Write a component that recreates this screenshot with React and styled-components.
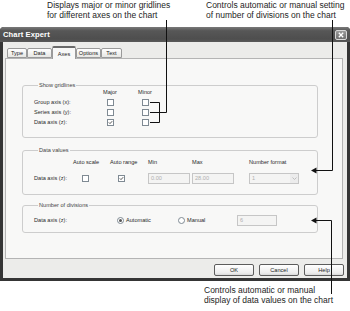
import React from 'react';
import styled, { createGlobalStyle } from 'styled-components';

const GlobalStyle = createGlobalStyle`
  body {
    margin: 0;
    background: #fff;
  }
`;

const Page = styled.div`
  position: relative;
  width: 350px;
  height: 311px;
  overflow: hidden;
  background: #fff;
  font-family: 'Liberation Sans', Arial, sans-serif;
`;

const TopNotes = styled.div`
  display: grid;
  grid-template-columns: 47px 159px 1fr;
  height: 27px;
`;

const Note = styled.div`
  grid-column: ${p => p.$col || 'auto'};
  font-size: 8.5px;
  line-height: 10px;
  color: #1e1e1e;
  white-space: nowrap;
`;

const BottomNote = styled(Note)`
  margin: 4px 0 0 204px;
`;

const Frame = styled.div`
  width: 350px;
  height: 254px;
  box-sizing: border-box;
  background: #353535;
  border-radius: 4px 4px 0 0;
  display: flex;
  flex-direction: column;
`;

const TitleBar = styled.div`
  height: 15px;
  display: flex;
  align-items: center;
  justify-content: space-between;
  padding: 0 3px;
  background: linear-gradient(#7a7a7a, #575757 25%, #4e4e4e 80%, #5a5a5a);
  border-radius: 4px 4px 0 0;
  color: #fff;
  font-size: 7.6px;
  font-weight: bold;
  letter-spacing: 0.1px;
`;

const CloseButton = styled.div`
  width: 12px;
  height: 10px;
  box-sizing: border-box;
  border: 1px solid #d8d8d8;
  border-radius: 2px;
  background: linear-gradient(#9a9a9a, #707070);
  display: flex;
  align-items: center;
  justify-content: center;
`;

const Body = styled.div`
  flex: 1;
  margin: 0 3px 3px;
  padding: 4px 3px 0 2px;
  background: #ececea;
  display: flex;
  flex-direction: column;
`;

const TabRow = styled.div`
  display: flex;
  align-items: flex-end;
  height: 12px;
  margin-left: 2px;
  position: relative;
  z-index: 1;
`;

const Tab = styled.div`
  width: ${p => p.$w}px;
  height: ${p => (p.$active ? 13 : 10)}px;
  box-sizing: border-box;
  border: 1px solid #9a9a9a;
  border-bottom: ${p => (p.$active ? 'none' : '1px solid #9a9a9a')};
  border-top: ${p => (p.$active ? '2px solid #6a6a6a' : '1px solid #9a9a9a')};
  border-radius: 2px 2px 0 0;
  background: ${p => (p.$active ? '#f8f8f7' : 'linear-gradient(#fff, #e6e6e3)')};
  margin-bottom: ${p => (p.$active ? -1 : 0)}px;
  font-size: 5.6px;
  color: #222;
  display: flex;
  align-items: center;
  justify-content: center;
`;

const Panel = styled.div`
  width: 338px;
  height: 201px;
  box-sizing: border-box;
  border: 1px solid #b4b4b4;
  background: #f8f8f7;
  padding: 26px 0 0 16px;
  display: flex;
  flex-direction: column;
  gap: ${p => p.$gap || 0}px;
`;

const Group = styled.div`
  width: 296px;
  height: ${p => p.$h}px;
  box-sizing: border-box;
  border: 1px solid #cdcdcd;
  border-radius: 3px;
  margin-top: ${p => p.$mt || 0}px;
  padding-left: 11px;
`;

const Legend = styled.div`
  width: fit-content;
  margin: -4px 0 ${p => p.$mb}px 4px;
  padding: 0 1px;
  background: #f8f8f7;
  font-size: 5.6px;
  line-height: 7px;
  color: #444;
`;

const Label = styled.span`
  font-size: 5.6px;
  line-height: 10px;
  color: #2a2a2a;
  white-space: nowrap;
`;

const GridlineGrid = styled.div`
  display: grid;
  grid-template-columns: 66px 20px 15px 20px;
  grid-auto-rows: 10px;
  align-items: center;
`;

const Cell = styled.div`
  grid-column: ${p => p.$col};
  display: flex;
  justify-content: ${p => (p.$center ? 'center' : 'flex-start')};
  padding-left: ${p => p.$pl || 0}px;
  align-items: center;
`;

const ValuesGrid = styled.div`
  display: grid;
  grid-template-columns: 39px 37px 38px 44px 57px 50px;
  grid-template-rows: 8px 12px;
  row-gap: 6px;
  margin-top: 4px;
  align-items: center;
`;

const DivisionsRow = styled.div`
  display: flex;
  align-items: center;
  height: 12px;
  margin-top: 5px;
`;

const Slot = styled.div`
  width: ${p => p.$w}px;
  display: flex;
  align-items: center;
  gap: 2px;
`;

const Box = styled.div`
  width: 7px;
  height: 7px;
  box-sizing: border-box;
  border: 1px solid #7f8a93;
  background: #fff;
  display: flex;
  align-items: center;
  justify-content: center;
`;

const RadioDot = styled.div`
  width: 7px;
  height: 7px;
  box-sizing: border-box;
  border: 1px solid #7f8a93;
  border-radius: 50%;
  background: #fff;
  display: flex;
  align-items: center;
  justify-content: center;
  &::after {
    content: '';
    display: ${p => (p.$on ? 'block' : 'none')};
    width: 3px;
    height: 3px;
    border-radius: 50%;
    background: #555;
  }
`;

const Field = styled.div`
  width: ${p => p.$w}px;
  height: 11px;
  box-sizing: border-box;
  border: 1px solid #c6c6c6;
  background: #f4f4f3;
  padding-left: 2px;
  font-size: 5.6px;
  color: #b0b0b0;
  display: flex;
  align-items: center;
  justify-content: space-between;
`;

const DropArrow = styled.div`
  width: 8px;
  height: 9px;
  display: flex;
  align-items: center;
  justify-content: center;
  background: #ececec;
`;

const ButtonRow = styled.div`
  display: flex;
  justify-content: flex-end;
  gap: 5px;
  margin-top: 5px;
`;

const Button = styled.div`
  width: 40px;
  height: 12px;
  box-sizing: border-box;
  border: 1px solid #5c5c5c;
  border-radius: 2px;
  background: linear-gradient(#fff, #ececec 80%, #d8d8d8);
  font-size: 5.6px;
  color: #222;
  display: flex;
  align-items: center;
  justify-content: center;
`;

const Leaders = styled.svg`
  position: absolute;
  left: 0;
  top: 0;
  pointer-events: none;
`;

const Check = ({ on }) => (
  <Box>
    {on && (
      <svg width="5" height="5" viewBox="0 0 5 5">
        <polyline points="0.8,2.4 2,3.6 4.2,1.2" fill="none" stroke="#444" strokeWidth="0.9" />
      </svg>
    )}
  </Box>
);

const tabs = [
  { name: 'Type', w: 20 },
  { name: 'Data', w: 25 },
  { name: 'Axes', w: 24, active: true },
  { name: 'Options', w: 25 },
  { name: 'Text', w: 21 },
];

const axes = [
  { label: 'Group axis (x):', major: false },
  { label: 'Series axis (y):', major: false },
  { label: 'Data axis (z):', major: true },
];

export default function App() {
  return (
    <Page>
      <GlobalStyle />
      <TopNotes>
        <Note $col="2">
          Displays major or minor gridlines
          <br />
          for different axes on the chart
        </Note>
        <Note $col="3">
          Controls automatic or manual setting
          <br />
          of number of divisions on the chart
        </Note>
      </TopNotes>

      <Frame>
        <TitleBar>
          <span>Chart Expert</span>
          <CloseButton>
            <svg width="6" height="6" viewBox="0 0 6 6">
              <path d="M0.8 0.8 L5.2 5.2 M5.2 0.8 L0.8 5.2" stroke="#fff" strokeWidth="1.3" />
            </svg>
          </CloseButton>
        </TitleBar>
        <Body>
          <TabRow>
            {tabs.map(t => (
              <Tab key={t.name} $w={t.w} $active={t.active}>
                {t.name}
              </Tab>
            ))}
          </TabRow>
          <Panel>
            <Group $h={53}>
              <Legend $mb={-2}>Show gridlines</Legend>
              <GridlineGrid>
                <Cell $col="2" $center>
                  <Label>Major</Label>
                </Cell>
                <Cell $col="4" $center>
                  <Label>Minor</Label>
                </Cell>
                {axes.map(a => (
                  <React.Fragment key={a.label}>
                    <Cell $col="1">
                      <Label>{a.label}</Label>
                    </Cell>
                    <Cell $col="2" $center>
                      <Check on={a.major} />
                    </Cell>
                    <Cell $col="4" $center>
                      <Check />
                    </Cell>
                  </React.Fragment>
                ))}
              </GridlineGrid>
            </Group>

            <Group $h={45} $mt={12}>
              <Legend $mb={0}>Data values</Legend>
              <ValuesGrid>
                <Cell $col="2"><Label>Auto scale</Label></Cell>
                <Cell $col="3"><Label>Auto range</Label></Cell>
                <Cell $col="4"><Label>Min</Label></Cell>
                <Cell $col="5"><Label>Max</Label></Cell>
                <Cell $col="6"><Label>Number format</Label></Cell>
                <Cell $col="1"><Label>Data axis (z):</Label></Cell>
                <Cell $col="2" $pl={9}><Check /></Cell>
                <Cell $col="3" $pl={8}><Check on /></Cell>
                <Cell $col="4"><Field $w={42}>0.00</Field></Cell>
                <Cell $col="5"><Field $w={42}>28.00</Field></Cell>
                <Cell $col="6">
                  <Field $w={50}>
                    1
                    <DropArrow>
                      <svg width="5" height="3" viewBox="0 0 5 3">
                        <polyline points="0.5,0.5 2.5,2.5 4.5,0.5" fill="none" stroke="#bbb" strokeWidth="0.9" />
                      </svg>
                    </DropArrow>
                  </Field>
                </Cell>
              </ValuesGrid>
            </Group>

            <Group $h={28} $mt={10}>
              <Legend $mb={0}>Number of divisions</Legend>
              <DivisionsRow>
                <Slot $w={83}><Label>Data axis (z):</Label></Slot>
                <Slot $w={61}><RadioDot $on /><Label>Automatic</Label></Slot>
                <Slot $w={59}><RadioDot /><Label>Manual</Label></Slot>
                <Field $w={40}>6</Field>
              </DivisionsRow>
            </Group>
          </Panel>
          <ButtonRow>
            <Button>OK</Button>
            <Button>Cancel</Button>
            <Button>Help</Button>
          </ButtonRow>
        </Body>
      </Frame>

      <BottomNote>
        Controls automatic or manual
        <br />
        display of data values on the chart
      </BottomNote>

      <Leaders width="350" height="311" viewBox="0 0 350 311">
        <g stroke="#111" strokeWidth="1" fill="none">
          <path d="M166.5 20 V112.5 H150" />
          <path d="M150 102.5 H159.5 V122.5 H150" />
          <path d="M332.5 20 V170.5 H315" />
          <path d="M331.5 294 V220.5 H315" />
        </g>
        <g fill="#111">
          <polygon points="311,170.5 316.5,167.5 316.5,173.5" />
          <polygon points="311,220.5 316.5,217.5 316.5,223.5" />
        </g>
      </Leaders>
    </Page>
  );
}
